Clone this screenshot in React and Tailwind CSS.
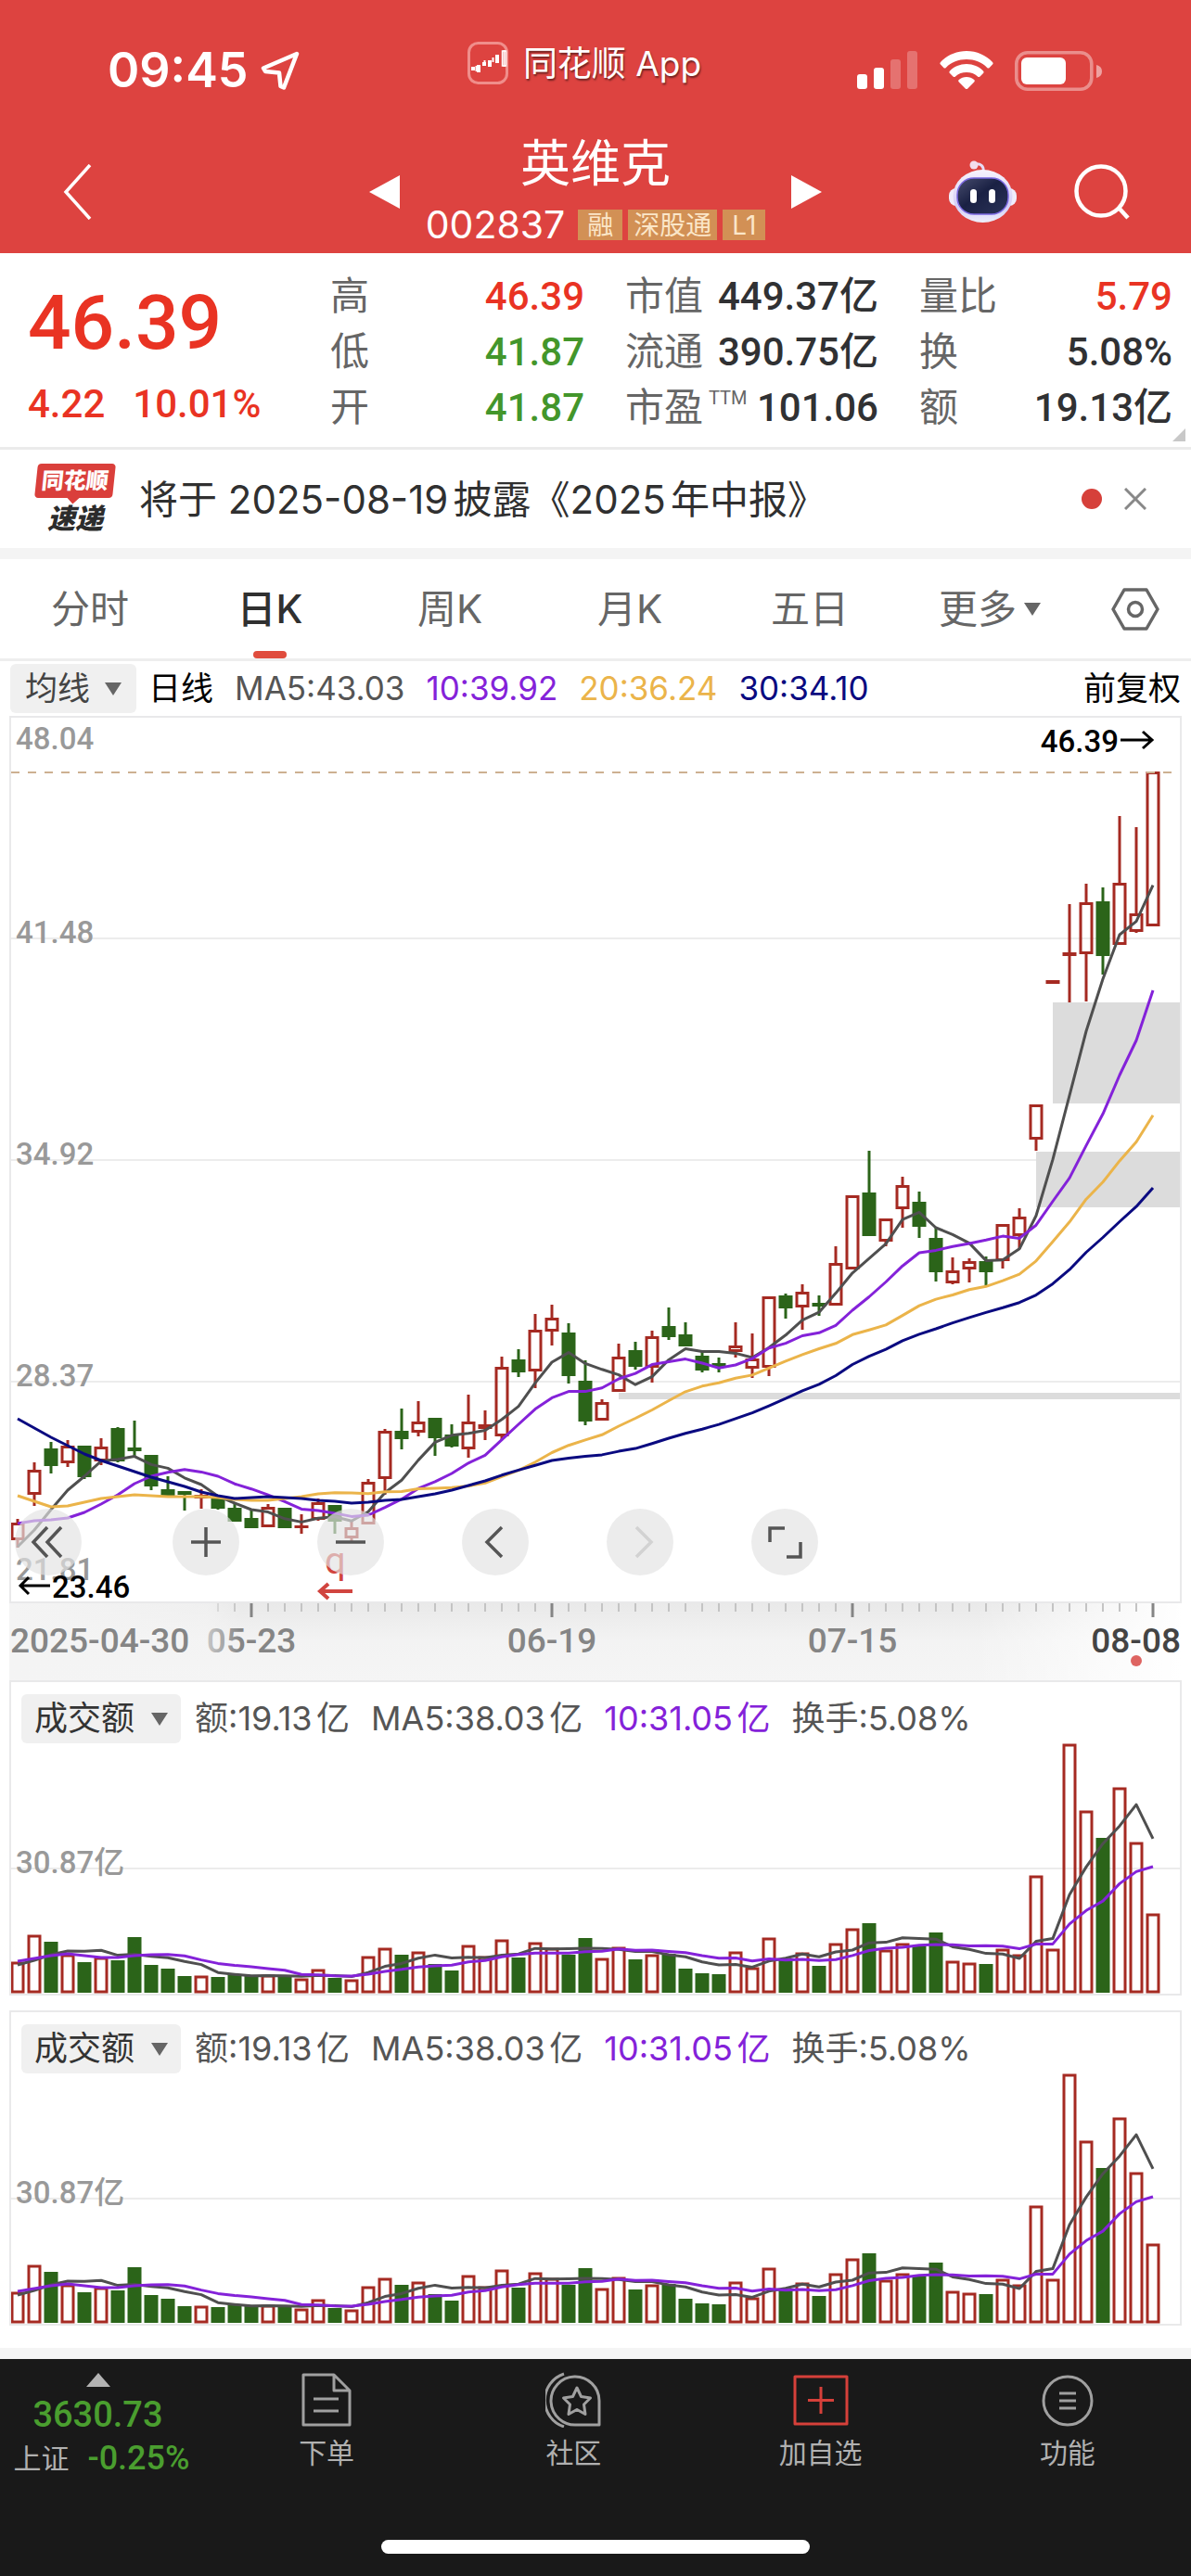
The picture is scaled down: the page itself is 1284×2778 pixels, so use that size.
import { useState } from 'react';

const RED = '#a52a22';
const GREEN = '#2b6419';
const FIRST_X = 19;
const STEP = 18;

// [direction, high, body top, body bottom, low] in chart units
const CANDLES = [
  ['r', 1638, 1642, 1661, 1669], ['r', 1577, 1585, 1612, 1624], ['g', 1555, 1562, 1581, 1589],
  ['r', 1553, 1559, 1578, 1582], ['g', 1559, 1559, 1593, 1595], ['r', 1551, 1560, 1576, 1580],
  ['g', 1539, 1540, 1576, 1577], ['g', 1532, 1561, 1565, 1570], ['g', 1569, 1569, 1603, 1607],
  ['g', 1592, 1606, 1613, 1613], ['g', 1608, 1608, 1612, 1629], ['r', 1606, 1612, 1616, 1627],
  ['g', 1616, 1616, 1627, 1628], ['g', 1620, 1626, 1641, 1641], ['g', 1627, 1637, 1648, 1648],
  ['r', 1622, 1625, 1647, 1647], ['g', 1626, 1626, 1648, 1648], ['r', 1633, 1645, 1648, 1654],
  ['r', 1616, 1620, 1639, 1640], ['g', 1623, 1623, 1641, 1654], ['r', 1640, 1647, 1659, 1663],
  ['r', 1595, 1598, 1644, 1644], ['r', 1541, 1543, 1595, 1612], ['g', 1519, 1543, 1552, 1563],
  ['r', 1511, 1533, 1545, 1549], ['g', 1529, 1529, 1551, 1570], ['g', 1536, 1547, 1560, 1561],
  ['r', 1504, 1533, 1563, 1572], ['r', 1521, 1536, 1541, 1553], ['r', 1463, 1474, 1549, 1553],
  ['g', 1455, 1466, 1480, 1485], ['r', 1417, 1434, 1479, 1497], ['r', 1407, 1421, 1436, 1451],
  ['g', 1427, 1437, 1484, 1492], ['g', 1467, 1489, 1533, 1537], ['r', 1509, 1512, 1532, 1532],
  ['r', 1449, 1463, 1501, 1501], ['g', 1447, 1456, 1474, 1477], ['r', 1435, 1441, 1475, 1491],
  ['g', 1410, 1430, 1442, 1445], ['g', 1426, 1439, 1452, 1452], ['g', 1457, 1462, 1478, 1480],
  ['g', 1464, 1470, 1474, 1480], ['r', 1426, 1451, 1458, 1464], ['r', 1438, 1465, 1476, 1486],
  ['r', 1398, 1398, 1475, 1484], ['g', 1395, 1397, 1411, 1422], ['r', 1385, 1393, 1410, 1434],
  ['g', 1397, 1405, 1409, 1419], ['r', 1344, 1362, 1408, 1408], ['r', 1289, 1289, 1369, 1369],
  ['g', 1241, 1286, 1333, 1333], ['r', 1314, 1314, 1339, 1344], ['r', 1269, 1278, 1304, 1324],
  ['g', 1285, 1296, 1323, 1335], ['g', 1323, 1335, 1372, 1382], ['r', 1356, 1370, 1384, 1385],
  ['r', 1357, 1360, 1369, 1383], ['g', 1355, 1360, 1372, 1387], ['r', 1320, 1320, 1360, 1368],
  ['r', 1303, 1312, 1333, 1347], ['r', 1191, 1191, 1229, 1241], ['r', 1057, 1057, 1061, 1061],
  ['r', 975, 1027, 1031, 1081], ['r', 953, 973, 1029, 1080], ['g', 957, 972, 1031, 1051],
  ['r', 880, 952, 1019, 1019], ['r', 892, 985, 1005, 1006], ['r', 832, 832, 999, 999],
];

const VOLUME_TOPS = [
  2116, 2087, 2094, 2108, 2116, 2111, 2114, 2089, 2119, 2123, 2131, 2131, 2132, 2129, 2131,
  2130, 2132, 2134, 2124, 2133, 2135, 2110, 2101, 2108, 2105, 2118, 2125, 2098, 2110, 2092,
  2111, 2095, 2101, 2108, 2090, 2112, 2100, 2113, 2108, 2107, 2123, 2128, 2129, 2105, 2122,
  2090, 2113, 2106, 2120, 2096, 2080, 2074, 2103, 2096, 2099, 2084, 2115, 2117, 2118, 2102,
  2108, 2023, 2102, 1881, 1953, 1982, 1928, 1987, 2064,
];

// values of each average before its window is full
const MA5_SEED = [1668, 1650, 1628, 1607];
const MA10_SEED = [1643, 1640, 1639, 1637, 1631, 1622, 1612, 1600, 1592];
const MA20_SEED = [
  1613, 1619, 1625, 1624, 1620, 1616, 1614, 1612, 1613, 1614, 1614, 1614, 1615, 1617, 1618,
  1618, 1616, 1614, 1611,
];
const MA30_SEED = [
  1530, 1540, 1550, 1559, 1568, 1575, 1581, 1587, 1593, 1598, 1603, 1609, 1613, 1616, 1615,
  1614, 1615, 1616, 1618, 1619, 1621, 1620, 1618, 1617, 1614, 1611, 1607, 1602, 1597,
];
const VOL5_SEED = [2119, 2114, 2108, 2104];
const VOL10_SEED = [2115, 2112, 2109, 2107, 2109, 2111, 2111, 2109, 2108];

const closes = CANDLES.map(([dir, , top, bottom]) => (dir === 'r' ? top : bottom));
const xAt = i => FIRST_X + i * STEP;

function averageLine(values, size, seed) {
  return values
    .map((_, i) => {
      const y = i < size - 1
        ? seed[i]
        : values.slice(i - size + 1, i + 1).reduce((a, b) => a + b, 0) / size;
      return `${xAt(i)},${y.toFixed(1)}`;
    })
    .join(' ');
}

function Line({ points, color }) {
  return <polyline points={points} fill="none" stroke={color} strokeWidth="3" strokeLinejoin="round" />;
}

function Candle({ x, data }) {
  const [dir, high, top, bottom, low] = data;
  const color = dir === 'r' ? RED : GREEN;
  const hollow = dir === 'r' && bottom - top > 5;
  return (
    <g stroke={color} strokeWidth="3">
      {high < top && <line x1={x} x2={x} y1={high} y2={top + 1} />}
      {low > bottom && <line x1={x} x2={x} y1={bottom - 1} y2={low} />}
      {hollow
        ? <rect x={x - 6} y={top + 1.5} width="12" height={bottom - top - 3} fill="none" />
        : <rect x={x - 7.5} y={top} width="15" height={bottom - top} fill={color} stroke="none" />}
    </g>
  );
}

function Caret({ className }) {
  return (
    <svg viewBox="0 0 18 14" className={className} fill="#666" aria-hidden="true">
      <path d="M0 0h18L9 14z" />
    </svg>
  );
}

function StatusBar() {
  return (
    <div className="grid h-[140px] grid-cols-3 items-center">
      <div className="flex items-center gap-3.5 pl-[116px] pt-3 text-[52px] leading-none font-semibold">
        <span>09:45</span>
        <svg viewBox="0 0 42 42" className="size-[42px]" fill="none" stroke="#fff" strokeWidth="4.5" strokeLinejoin="round">
          <path d="M39 3L3 18.500l2 3.500 15 1.500 1.500 14.500 3.500 1.500z" />
        </svg>
      </div>
      <div className="flex items-center justify-center gap-4 pr-6 pb-1 text-[37px] leading-none whitespace-nowrap [text-shadow:1px_2px_2px_rgb(0_0_0/0.5)]">
        <svg viewBox="0 0 44 46" className="h-[46px] w-11" fill="none" aria-hidden="true">
          <rect x="1.500" y="1.500" width="41" height="43" rx="10" stroke="#f08e8b" strokeWidth="3" />
          <path d="M4 29h4M12 25v8M16 24h4M24 20v7M32 14v9" stroke="#fff" strokeWidth="4" />
          <path d="M9.500 26v6M18.500 20v6M27.500 17v5M39.500 9v18" stroke="#fff" strokeWidth="2" />
          <rect x="37.500" y="10" width="4" height="16" stroke="#fff" strokeWidth="1.500" />
        </svg>
        <span>同花顺 App</span>
      </div>
      <div className="flex items-center justify-end gap-[23px] pr-24 pt-3">
        <svg viewBox="0 0 66 42" className="h-[42px] w-[66px]" fill="#fff">
          <rect x="0" y="25" width="11" height="16" rx="3" />
          <rect x="18" y="18" width="11" height="23" rx="3" />
          <rect x="36" y="9" width="11" height="32" rx="3" opacity=".25" />
          <rect x="54" y="0" width="11" height="41" rx="3" opacity=".25" />
        </svg>
        <svg viewBox="0 0 58 42" className="h-[42px] w-[58px]" fill="#fff">
          <path d="M29 0c11 0 21 4.500 28 12 .8.9.8 1.800 0 2.600l-3.300 3.300c-.8.8-1.700.8-2.500 0C45.500 12 37.500 9 29 9S12.500 12 6.800 17.900c-.8.8-1.700.8-2.500 0L1 14.600c-.8-.8-.8-1.700 0-2.600C8 4.500 18 0 29 0z" />
          <path d="M29 14c7 0 13.500 2.800 18 7.500.8.8.8 1.800 0 2.600l-3.500 3.300c-.8.8-1.700.8-2.500 0C37.800 24.500 33.600 23 29 23s-8.800 1.500-12 4.400c-.8.8-1.700.8-2.500 0L11 24.100c-.8-.8-.8-1.800 0-2.600C15.500 16.800 22 14 29 14z" />
          <path d="M29 28c3.200 0 6 1.200 8.200 3 .8.8.8 1.600 0 2.400l-6.900 7c-.8.800-1.800.8-2.600 0l-6.900-7c-.8-.8-.8-1.600 0-2.400C23 29.200 25.800 28 29 28z" />
        </svg>
        <svg viewBox="0 0 94 43" className="h-[43px] w-[94px]" fill="#fff">
          <rect x="1.800" y="1.800" width="81" height="39.400" rx="12" fill="none" stroke="#fff" strokeOpacity=".4" strokeWidth="3.600" />
          <rect x="7" y="7" width="48" height="29" rx="6" />
          <path d="M88 15c4 1 6 3.500 6 7s-2 6-6 7z" opacity=".5" />
        </svg>
      </div>
    </div>
  );
}

function Robot() {
  return (
    <svg viewBox="0 0 73 68" className="h-[68px] w-[73px]" aria-hidden="true">
      <defs>
        <linearGradient id="shell" x1="0" y1="0" x2="0" y2="1">
          <stop offset="0" stopColor="#f7f2fc" />
          <stop offset=".7" stopColor="#d3cdf6" />
          <stop offset="1" stopColor="#eef0fb" />
        </linearGradient>
        <linearGradient id="visor" x1="0" y1="0" x2="1" y2="1">
          <stop offset="0" stopColor="#484d6e" />
          <stop offset=".45" stopColor="#1a2144" />
          <stop offset="1" stopColor="#2b3358" />
        </linearGradient>
      </defs>
      <path d="M37 12c1-6-3-9-9-8" fill="none" stroke="#e6dbf6" strokeWidth="3" />
      <circle cx="27" cy="5" r="4.500" fill="#f3dcec" />
      <rect x="0" y="30" width="73" height="19" rx="8" fill="#f0ecfb" />
      <ellipse cx="36.500" cy="38.500" rx="32" ry="28.500" fill="url(#shell)" />
      <rect x="9" y="19" width="55" height="39" rx="18" fill="url(#visor)" stroke="#7a68e0" strokeWidth="1.500" />
      <rect x="23" y="31" width="7" height="15" rx="3.500" fill="#fff" />
      <rect x="43" y="31" width="7" height="15" rx="3.500" fill="#fff" />
    </svg>
  );
}

function StockHeader() {
  return (
    <div className="grid h-[133px] grid-cols-[1fr_auto_1fr] items-center">
      <button type="button" aria-label="返回" className="ml-[67px] w-10">
        <svg viewBox="0 0 32 60" className="h-[60px] w-8" fill="none" stroke="#fff" strokeWidth="3.500">
          <path d="M30 1L4 30l26 29" />
        </svg>
      </button>
      <div className="flex items-center gap-7">
        <button type="button" aria-label="上一只">
          <svg viewBox="0 0 33 36" className="h-9 w-[33px]" fill="#fff"><path d="M33 0v36L0 18z" /></svg>
        </button>
        <div className="flex flex-col items-center">
          <h1 className="text-[54px] leading-[72px]">英维克</h1>
          <div className="flex h-[60px] items-center gap-1.5 text-[28px]">
            <span className="mr-2 text-[41px]">002837</span>
            <span className="flex h-[33px] items-center bg-[#d29055] px-2.5 text-[#fbe6c8]">融</span>
            <span className="flex h-[33px] items-center bg-[#d29055] px-1.5 text-[#fbe6c8]">深股通</span>
            <span className="flex h-[33px] items-center bg-[#d29055] px-2.5 text-[#fbe6c8]">L1</span>
          </div>
        </div>
        <button type="button" aria-label="下一只">
          <svg viewBox="0 0 33 36" className="h-9 w-[33px]" fill="#fff"><path d="M0 0v36l33-18z" /></svg>
        </button>
      </div>
      <div className="flex items-center justify-end gap-[62px] pr-[66px]">
        <button type="button" aria-label="智能助手"><Robot /></button>
        <button type="button" aria-label="搜索">
          <svg viewBox="0 0 60 60" className="size-[60px]" fill="none" stroke="#fff" strokeWidth="4.500">
            <circle cx="29" cy="29" r="26.500" />
            <path d="M48 47l10 11" />
          </svg>
        </button>
      </div>
    </div>
  );
}

const QUOTES = [
  [['高', '46.39', 'text-[#e93323]'], ['低', '41.87', 'text-[#43962b]'], ['开', '41.87', 'text-[#43962b]']],
  [['市值', '449.37亿', ''], ['流通', '390.75亿', ''], ['市盈', '101.06', '', 'TTM']],
  [['量比', '5.79', 'text-[#e93323]'], ['换', '5.08%', ''], ['额', '19.13亿', '']],
];

function Quotes() {
  return (
    <section className="relative grid grid-cols-[282fr_274fr_273fr_273fr] gap-x-11 border-b-3 border-[#ebebeb] pt-[15px] pr-5 pb-3.5 pl-[30px] font-['Roboto','Noto_Sans_CJK_SC',sans-serif]">
      <div className="font-medium text-[#e93323]">
        <p className="flex h-[120px] items-center text-[82px] leading-none">46.39</p>
        <p className="flex h-[60px] items-center gap-[30px] pb-1 text-[42px] leading-none whitespace-nowrap">
          <span>4.22</span><span>10.01%</span>
        </p>
      </div>
      {QUOTES.map((rows, i) => (
        <dl key={i} className="whitespace-nowrap">
          {rows.map(([label, value, tone, sup]) => (
            <div key={label} className="flex h-[60px] items-center justify-between pt-1 text-[42px] leading-none">
              <dt className="flex text-[#666]">
                {label}
                {sup && <sup className="top-0 ml-1.5 text-xl leading-none">{sup}</sup>}
              </dt>
              <dd className={`font-medium ${tone || 'text-[#303133]'}`}>{value}</dd>
            </div>
          ))}
        </dl>
      ))}
      <svg viewBox="0 0 14 14" className="absolute right-1.5 bottom-1.5 size-3.5" fill="#c8c8c8"><path d="M14 0v14H0z" /></svg>
    </section>
  );
}

function NewsBar() {
  return (
    <section className="flex h-[118px] items-center border-b-12 border-[#f4f4f4] pr-12 pl-9">
      <div className="flex w-[90px] flex-col items-center pb-0.5">
        <div className="relative flex h-[37px] w-[84px] -skew-x-6 items-center justify-center rounded-sm bg-[#da3f3b] text-[24px] leading-none font-black text-white">
          同花顺
          <span className="absolute -bottom-1 size-3 rotate-45 bg-[#da3f3b]" />
        </div>
        <div className="mt-1.5 text-[30px] leading-8 font-black text-[#2c2c2c] italic">速递</div>
      </div>
      <a href="#news" className="ml-6 flex-1 truncate text-[42px] text-[#303030] [text-autospace:normal]">将于 2025-08-19披露《2025年中报》</a>
      <span className="size-[22px] rounded-full bg-[#d6403a]" />
      <button type="button" aria-label="关闭" className="ml-6">
        <svg viewBox="0 0 24 24" className="size-6" stroke="#888" strokeWidth="3"><path d="M1 1l22 22M23 1L1 23" /></svg>
      </button>
    </section>
  );
}

const TABS = ['分时', '日K', '周K', '月K', '五日', '更多'];

function PeriodTabs() {
  const [active, setActive] = useState('日K');
  return (
    <nav className="flex h-[110px] border-b-3 border-[#eee] text-[42px]">
      {TABS.map(tab => (
        <button
          key={tab}
          type="button"
          onClick={() => setActive(tab)}
          className={`relative flex flex-1 items-center justify-center gap-2 ${active === tab ? 'font-medium text-[#303030]' : 'text-[#666]'}`}
        >
          {tab}
          {tab === '更多' && <Caret className="h-3.5 w-[18px]" />}
          {active === tab && <span className="absolute bottom-0 h-2 w-9 rounded-full bg-[#e04c3d]" />}
        </button>
      ))}
      <button type="button" aria-label="设置" className="flex w-30 items-center justify-center">
        <svg viewBox="0 0 52 46" className="h-[46px] w-[52px]" fill="none" stroke="#666" strokeWidth="3.500" strokeLinejoin="round">
          <path d="M14 2h24l12 21-12 21H14L2 23z" />
          <circle cx="26" cy="23" r="7.500" />
        </svg>
      </button>
    </nav>
  );
}

function AverageBar() {
  return (
    <div className="flex h-[59px] items-center gap-[23px] px-[11px] text-[35px] whitespace-nowrap">
      <button type="button" className="-mr-2.5 flex h-[53px] items-center gap-4 rounded-md bg-[#f0f0f0] px-4 text-[#444]">
        均线<Caret className="h-3.5 w-[18px]" />
      </button>
      <span className="text-black">日线</span>
      <span className="text-[#555]">MA5:43.03</span>
      <span className="text-[#8422d9]">10:39.92</span>
      <span className="text-[#ebb44a]">20:36.24</span>
      <span className="text-[#0a0a80]">30:34.10</span>
      <span className="ml-auto text-black">前复权</span>
    </div>
  );
}

const AXIS_PRICES = [['48.04', 808], ['41.48', 1017], ['34.92', 1256], ['28.37', 1495], ['21.81', 1704]];

function PriceChart() {
  return (
    <svg viewBox="12 774 1260 953" className="block h-auto w-full font-['Roboto',sans-serif]">
      {[1012, 1251, 1490].map(y => <path key={y} d={`M12 ${y}H1272`} stroke="#ececec" strokeWidth="2" />)}
      <g fill="#dcdcdc">
        <rect x="1135" y="1081" width="138" height="109" />
        <rect x="1117" y="1242" width="156" height="60" />
        <rect x="667" y="1502" width="606" height="7" />
      </g>
      <g fill="#999" fontSize="33" fontWeight="500">
        {AXIS_PRICES.map(([price, y]) => <text key={price} x="17" y={y}>{price}</text>)}
      </g>
      {CANDLES.map((c, i) => <Candle key={i} x={xAt(i)} data={c} />)}
      <path d="M12 833H1272" stroke="#cdb091" strokeWidth="2" strokeDasharray="9 9" />
      <Line points={averageLine(closes, 5, MA5_SEED)} color="#4f4f4f" />
      <Line points={averageLine(closes, 10, MA10_SEED)} color="#8422d9" />
      <Line points={averageLine(closes, 20, MA20_SEED)} color="#ebb44a" />
      <Line points={averageLine(closes, 30, MA30_SEED)} color="#0a0a80" />
      <g fontSize="33" fontWeight="500">
        <text x="1206" y="811" textAnchor="end">46.39</text>
        <text x="56" y="1723">23.46</text>
      </g>
      <g fill="none" stroke="#000" strokeWidth="3">
        <path d="M1208 798h34M1232 789l10 9-10 9" />
        <path d="M54 1710H22M31 1701l-9 9 9 9" />
      </g>
      <text x="350" y="1697" fontSize="40" fill="#d1443f">q</text>
      <path d="M380 1716h-34M354 1708l-9 8 9 8" fill="none" stroke="#d1443f" strokeWidth="4" />
    </svg>
  );
}

const TOOLS = [
  ['最早', 'M16 1L1 17l15 16M31 1L16 17l15 16'],
  ['放大', 'M17 1v32M1 17h32'],
  ['缩小', 'M1 17h32'],
  ['左移', 'M24 1L8 17l16 16'],
  ['右移', 'M13 1l16 16-16 16'],
  ['全屏', 'M1 17V2h16M34 17v16H19'],
];

function ChartTools() {
  return (
    <div className="absolute bottom-[28px] left-1 flex gap-21">
      {TOOLS.map(([label, d], i) => (
        <button
          key={label}
          type="button"
          aria-label={label}
          className={`flex size-[72px] items-center justify-center rounded-full bg-[#e2e2e2]/67 ${i === 0 ? 'mr-[14px]' : ''}`}
        >
          <svg viewBox="0 0 34 34" className="size-[34px] overflow-visible" fill="none" stroke={label === '右移' ? '#d2d2d2' : '#555'} strokeWidth="3.500">
            <path d={d} />
          </svg>
        </button>
      ))}
    </div>
  );
}

const DATES = [['05-23', 14], ['06-19', 32], ['07-15', 50]];

function TimeAxis() {
  const ticks = CANDLES.map((_, i) => i).filter(i => i > 11);
  return (
    <div className="mx-2.5">
      <svg viewBox="10 1729 1264 83" className="block h-auto w-full font-['Roboto',sans-serif]" fontSize="37" fontWeight="500" fill="#858585">
        <defs>
          <linearGradient id="axisShade" x1="0" y1="0" x2="0" y2="1">
            <stop offset="0" stopColor="#e9e9e9" />
            <stop offset=".5" stopColor="#f3f3f3" />
            <stop offset="1" stopColor="#f5f5f5" />
          </linearGradient>
          <linearGradient id="axisLeft">
            <stop offset="0" stopColor="#f4f4f4" />
            <stop offset=".85" stopColor="#f4f4f4" stopOpacity=".6" />
            <stop offset="1" stopColor="#f4f4f4" stopOpacity="0" />
          </linearGradient>
          <linearGradient id="axisRight">
            <stop offset="0" stopColor="#fff" stopOpacity="0" />
            <stop offset="1" stopColor="#fff" />
          </linearGradient>
        </defs>
        <rect x="10" y="1729" width="1264" height="83" fill="url(#axisShade)" />
        <rect x="1050" y="1729" width="224" height="83" fill="url(#axisRight)" />
        {ticks.map(i => {
          const major = i % 18 === 14;
          return <path key={i} d={`M${xAt(i)} 1729v${major ? 15 : 9}`} stroke={major ? '#858585' : '#c4c4c4'} strokeWidth={major ? 3 : 2} />;
        })}
        {DATES.map(([date, i]) => <text key={date} x={xAt(i)} y="1782" textAnchor="middle">{date}</text>)}
        <rect x="10" y="1729" width="250" height="83" fill="url(#axisLeft)" />
        <text x="11" y="1782">2025-04-30</text>
        <text x="1273" y="1782" textAnchor="end" fill="#444">08-08</text>
        <circle cx="1225" cy="1791" r="6" fill="#de6461" />
      </svg>
    </div>
  );
}

function VolumePanel() {
  return (
    <section className="mx-2.5 border-2 border-[#e9e9ea]">
      <div className="flex h-[66px] items-end gap-[23px] px-[11px] text-[36px] leading-[53px] whitespace-nowrap text-[#555] [text-autospace:normal]">
        <button type="button" className="-mr-2 flex h-[53px] items-center gap-[18px] rounded-md bg-[#f0f0f0] px-3.5 text-[#333]">
          成交额<Caret className="h-3.5 w-[18px]" />
        </button>
        <span>额:19.13亿</span>
        <span>MA5:38.03亿</span>
        <span className="text-[#8422d9]">10:31.05亿</span>
        <span>换手:5.08%</span>
      </div>
      <svg viewBox="12 1880 1260 270" className="block h-auto w-full font-['Roboto','Noto_Sans_CJK_SC',sans-serif]">
        <path d="M12 2015H1272" stroke="#ececec" strokeWidth="2" />
        <text x="17" y="2020" fontSize="33" fontWeight="500" fill="#999">30.87亿</text>
        {VOLUME_TOPS.map((top, i) => {
          const x = xAt(i);
          return CANDLES[i][0] === 'r'
            ? <rect key={i} x={x - 6} y={top + 1} width="12" height={2147 - top} fill="none" stroke={RED} strokeWidth="3" />
            : <rect key={i} x={x - 7.5} y={top} width="15" height={2149 - top} fill={GREEN} />;
        })}
        <Line points={averageLine(VOLUME_TOPS, 5, VOL5_SEED)} color="#4f4f4f" />
        <Line points={averageLine(VOLUME_TOPS, 10, VOL10_SEED)} color="#8422d9" />
      </svg>
    </section>
  );
}

function NavItem({ label, children }) {
  return (
    <a href="#nav" className="flex flex-1 flex-col items-center gap-1.5 pt-3.5 text-[30px] leading-[42px] text-[#b0b0b0]">
      <svg viewBox="0 0 60 60" className="size-[60px]" fill="none" stroke="#a0a0a0" strokeWidth="3" strokeLinejoin="round">
        {children}
      </svg>
      {label}
    </a>
  );
}

function BottomBar() {
  return (
    <footer className="flex flex-1 flex-col justify-between bg-[#191919] pb-6">
      <div className="flex">
        <button type="button" className="flex w-[219px] flex-col items-center pt-[15px] pr-2 text-[#4a9e2f]">
          <svg viewBox="0 0 26 15" className="h-[15px] w-[26px]" fill="#b3b3b3"><path d="M13 0l13 15H0z" /></svg>
          <span className="pt-1 font-['Roboto',sans-serif] text-[38px] leading-[52px] font-medium">3630.73</span>
          <span className="flex gap-5 pl-2 text-[30px] leading-[42px] whitespace-nowrap">
            <span className="text-[#b0b0b0]">上证</span>
            <span className="font-['Roboto',sans-serif] text-[36px] font-medium">-0.25%</span>
          </span>
        </button>
        <NavItem label="下单">
          <path d="M5 3h33l17 17v37H5zM38 3v17h17M16 29h27M16 42h27" />
        </NavItem>
        <NavItem label="社区">
          <path d="M58 57H34a26 26 0 1 1 24-26zM20 2a30 30 0 0 0 0 57" />
          <path d="M34 17l4.500 9.500 10 1.500-7 7 1.500 10.500-9-5-9 5 1.500-10.500-7-7 10-1.500z" />
        </NavItem>
        <NavItem label="加自选">
          <path d="M2 5h56v51H2zM30 16v29M16 30.500h28" stroke="#d6403a" />
        </NavItem>
        <NavItem label="功能">
          <circle cx="30" cy="31" r="26" />
          <path d="M21 23h18M21 31h18M21 39h18" />
        </NavItem>
      </div>
      <div className="h-[15px] w-[36%] self-center rounded-full bg-white" />
    </footer>
  );
}

export default function App() {
  return (
    <div className="flex min-h-screen w-full flex-col bg-white font-['Inter','Noto_Sans_CJK_SC',sans-serif]">
      <header className="bg-[#dd4340] text-white">
        <StatusBar />
        <StockHeader />
      </header>
      <Quotes />
      <NewsBar />
      <PeriodTabs />
      <AverageBar />
      <div className="relative mx-2.5 border-2 border-[#e9e9ea]">
        <PriceChart />
        <ChartTools />
      </div>
      <TimeAxis />
      <VolumePanel />
      <div className="h-4" />
      <VolumePanel />
      <div className="mt-6 h-3 bg-[#f4f4f4]" />
      <BottomBar />
    </div>
  );
}
